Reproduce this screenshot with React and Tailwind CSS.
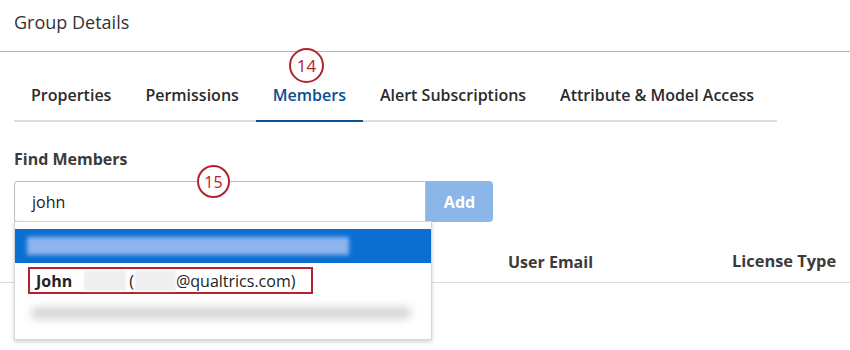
import React from "react";

const tabs = ["Properties", "Permissions", "Members", "Alert Subscriptions", "Attribute & Model Access"];

const Step = ({ n, className }) => (
    <div
        className={`absolute flex items-center justify-center rounded-full border-2 border-[#b5212e] bg-white text-[#b5212e] ${className}`}
    >
        {n}
    </div>
);

const App = () => {
    return (
        <div className="relative w-[850px] h-[350px] overflow-hidden bg-white font-['Open_Sans',sans-serif] text-[#32363a]">
            <header className="h-[52px] px-[14px] pt-[8px] border-b border-[#b4b4b4]">
                <h1 className="text-[18px] leading-[28px] text-[#333]">Group Details</h1>
            </header>

            <nav className="mx-[14px] mt-[19px] w-[763px] border-b-2 border-[#dedede]">
                <ul className="flex">
                    {tabs.map((t) => (
                        <li
                            key={t}
                            className={`-mb-[2px] px-[17px] pt-[12px] pb-[13px] text-[16px] leading-[24px] font-semibold border-b-2 ${
                                t === "Members"
                                    ? "text-[#0b4f8f] border-[#0b4f8f]"
                                    : "text-[#2b2b2b] border-transparent"
                            }`}
                        >
                            {t}
                        </li>
                    ))}
                </ul>
            </nav>

            <section className="pt-[26px]">
                <label className="block px-[14px] text-[16px] leading-[22px] font-bold text-[#3b3b3b]">Find Members</label>
                <div className="mt-[11px] px-[14px] flex">
                    <div className="w-[412px] h-[41px] border border-[#bdbdbd] rounded-l-[3px] px-[17px] flex items-center text-[16px] text-[#222]">
                        john
                    </div>
                    <button className="w-[67px] h-[41px] rounded-r-[4px] bg-[#8ab7e7] text-white font-bold text-[16px]">
                        Add
                    </button>
                </div>

                <div className="mt-[19px] flex border-b border-[#dcdcdc] h-[42px] items-center text-[16px] font-bold text-[#3b3b3b]">
                    <span className="ml-[508px]">User Email</span>
                    <span className="ml-[139px] whitespace-nowrap text-[16.4px]">License Type</span>
                </div>
            </section>

            <div className="absolute left-[14px] top-[221px] w-[418px] h-[119px] bg-white border border-[#d6d6d6] shadow-[0_2px_4px_rgba(0,0,0,0.18)] pt-[7px]">
                <div className="h-[34px] bg-[#0b6fd2] flex items-center pl-[12px]">
                    <div className="w-[322px] h-[18px] bg-[#8db4ec] blur-[2px]" />
                </div>
                <div className="ml-[13px] mt-[4px] w-[285px] h-[27px] border-2 border-[#b5212e] flex items-center pl-[6px] text-[16px] text-[#222] whitespace-nowrap">
                    <span className="font-bold">John</span>
                    <span className="ml-[12px] w-[42px] h-[20px] bg-[#efefef] blur-[1px]" />
                    <span className="ml-[3px]">(</span>
                    <span className="ml-[1px] w-[41px] h-[20px] bg-[#efefef] blur-[1px]" />
                    <span>@qualtrics.com)</span>
                </div>
                <div className="ml-[16px] mt-[13px] w-[380px] h-[12px] rounded-full bg-[#d4d4d4] blur-[4px]" />
            </div>

            <Step n="14" className="left-[289px] top-[48px] w-[35px] h-[35px] text-[17px]" />
            <Step n="15" className="left-[197px] top-[165px] w-[33px] h-[33px] text-[16px]" />
        </div>
    );
};

export default App;
